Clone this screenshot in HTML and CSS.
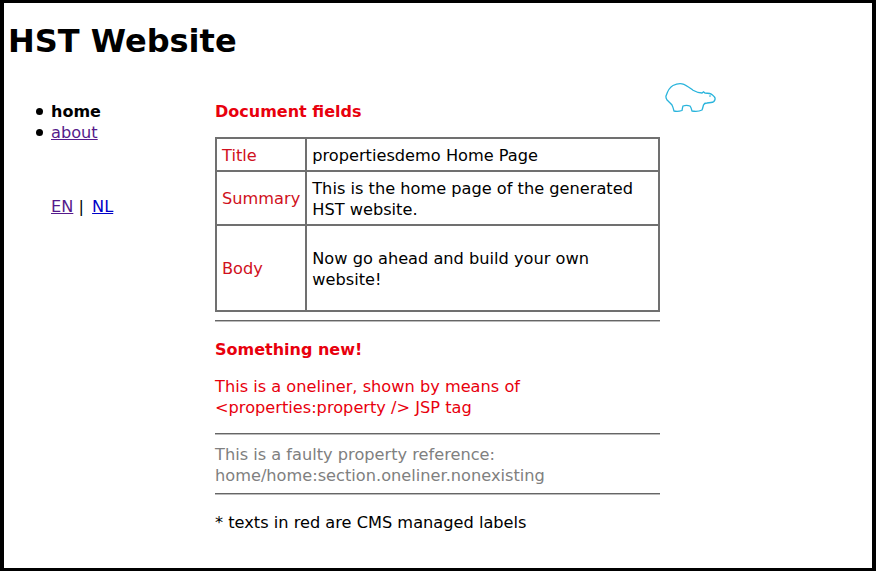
FILE: index.html
```html
<!DOCTYPE html>
<html lang="en">

<head>
    <meta charset="UTF-8">
    <title>HST Website</title>
    <link rel="stylesheet" href="styles.css">
</head>

<body>
    <div class="frame">
        <h1>HST Website</h1>
        <div class="columns">
            <div class="nav">
                <ul>
                    <li class="active">home</li>
                    <li><a class="visited" href="#">about</a></li>
                </ul>
                <p class="langs"><a class="visited" href="#">EN</a> | <a class="lang-nl" href="#">NL</a></p>
            </div>
            <div class="main">
                <h2>Document fields</h2>
                <table>
                    <tr class="row-title">
                        <td class="label">Title</td>
                        <td>propertiesdemo Home Page</td>
                    </tr>
                    <tr class="row-summary">
                        <td class="label">Summary</td>
                        <td>This is the home page of the generated HST website.</td>
                    </tr>
                    <tr class="row-body">
                        <td class="label">Body</td>
                        <td>Now go ahead and build your own website!</td>
                    </tr>
                </table>
                <hr class="rule-first">
                <h2 class="new">Something new!</h2>
                <p class="oneliner">This is a oneliner, shown by means of &lt;properties:property /&gt; JSP tag</p>
                <hr class="rule-second">
                <p class="faulty">This is a faulty property reference: home/home:section.oneliner.nonexisting</p>
                <hr class="rule-third">
                <p class="note">* texts in red are CMS managed labels</p>
            </div>
            <div class="logo">
                <svg width="52" height="32" viewBox="0 0 52 32">
                    <path d="M1 13 C3 7 5 4 8 2.5 C12 0.5 15 0.5 17 0.8 C21 1.5 25 5 28 7.3 C31 9 34 10 37 10 L38.5 8.8 L40 10 C43 10 46 10.5 47.5 12 C49.5 13.5 50.5 15 50 16.5 C49.5 18.5 48 19.5 46 19.5 L42 20 C40 20 39 20.5 38.5 22 C38 24 37.5 26 37 27 C34 28.5 30 28.5 27 28 C26.5 26 26 24 25 23 C23 22.3 20 22.3 18 23 C17.5 24.5 17.3 26 17 27.5 C14 28.5 11 28.5 9 28 C8.5 26 8 24 7 22 C5.5 20 3.5 18.5 2 17 C1.2 15.8 0.8 14 1 13 Z" fill="none" stroke="#29b4dc" stroke-width="1.3"/>
                    <path d="M44 13 L46 13" fill="none" stroke="#29b4dc" stroke-width="1"/>
                </svg>
            </div>
        </div>
    </div>
</body>

</html>
```

FILE: styles.css
```css
html, body {
    margin: 0;
    background-color: white;
}

body {
    font-family: "DejaVu Sans", sans-serif;
    font-size: 16.2px;
    line-height: 21px;
    color: black;
}

.frame {
    box-sizing: border-box;
    width: 876px;
    height: 571px;
    border: 3px solid black;
    border-left-width: 4px;
    border-right-width: 4px;
    padding: 0 4px;
    overflow: hidden;
}

h1 {
    margin: 0;
    padding-top: 19px;
    font-size: 32px;
    line-height: 38px;
}

.columns {
    display: flex;
    margin-top: 41px;
}

.nav {
    width: 207px;
}

.nav ul {
    margin: 0;
    padding: 0 0 0 28px;
    list-style: none;
}

.nav li {
    display: flex;
    align-items: center;
}

.nav li::before {
    content: "";
    width: 7px;
    height: 7px;
    margin-right: 8px;
    border-radius: 50%;
    background-color: black;
}

.active {
    font-weight: bold;
    font-size: 16px;
}

a {
    color: #0000c8;
}

a.visited {
    color: #551a8b;
}

.lang-nl {
    margin-left: 3px;
}

.langs {
    margin: 53px 0 0 43px;
}

.main {
    width: 445px;
}

h2 {
    margin: 0;
    font-size: 16px;
    line-height: 21px;
    color: #e8000d;
}

table {
    width: 445px;
    margin-top: 15px;
    border: 1px solid #707070;
    border-spacing: 0;
    border-collapse: collapse;
}

td {
    padding: 1px 5px 0;
    border: 2px solid #707070;
}

.label {
    width: 74px;
    color: #d01020;
}

.row-title td {
    height: 30px;
}

.row-summary td {
    height: 51px;
}

.row-body td {
    height: 83px;
}

hr {
    height: 0;
    margin: 0;
    border: 0;
    border-top: 1px solid #666;
    border-bottom: 1px solid #bbb;
}

.rule-first {
    margin-top: 8px;
}

.new {
    margin-top: 17px;
}

.oneliner {
    margin: 16px 0 0;
    color: #e8000d;
}

.rule-second {
    margin-top: 15px;
}

.faulty {
    margin: 9px 0 0;
    color: gray;
}

.rule-third {
    margin-top: 7px;
}

.note {
    margin: 17px 0 0;
}

.logo {
    margin: -18px 0 0 5px;
}
```
